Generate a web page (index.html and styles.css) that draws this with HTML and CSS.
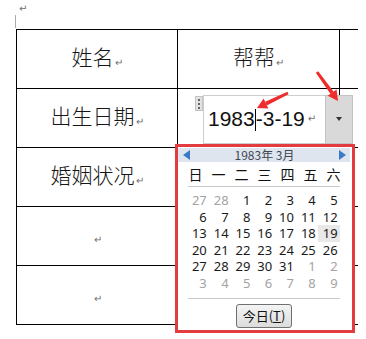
FILE: index.html
```html
<!DOCTYPE html>
<html>
<head>
<meta charset="utf-8">
<link rel="stylesheet" href="styles.css">
</head>
<body>
<div class="page">
  <div class="top"><span class="pm pm-top">↵</span></div>
  <table class="doc">
    <tr>
      <td class="c1"><span class="cell-text">姓名</span><span class="pm">↵</span></td>
      <td class="c2"><span class="cell-text">帮帮</span><span class="pm">↵</span></td>
      <td class="c3"></td>
    </tr>
    <tr>
      <td class="c1"><span class="cell-text">出生日期</span><span class="pm">↵</span></td>
      <td class="c2"></td>
      <td class="c3"></td>
    </tr>
    <tr>
      <td class="c1"><span class="cell-text">婚姻状况</span><span class="pm">↵</span></td>
      <td class="c2"></td>
      <td class="c3"></td>
    </tr>
    <tr>
      <td class="c1"><span class="pm">↵</span></td>
      <td class="c2"></td>
      <td class="c3"></td>
    </tr>
    <tr>
      <td class="c1"><span class="pm">↵</span></td>
      <td class="c2"></td>
      <td class="c3"></td>
    </tr>
  </table>

  <div class="datectl">
    <div class="handle"><i></i><i></i><i></i></div>
    <div class="datebox"><span>1983</span><span class="caret"></span><span>-3-19</span><span class="pm pm-date">↵</span></div>
    <div class="dropbtn"><span class="tri-down"></span></div>
  </div>

  <div class="popup">
    <div class="cal-head">
      <span class="tri-left"></span>
      <span class="cal-title">1983年 3月</span>
      <span class="tri-right"></span>
    </div>
    <div class="weekdays">
      <span>日</span><span>一</span><span>二</span><span>三</span><span>四</span><span>五</span><span>六</span>
    </div>
    <div class="sep"></div>
    <div class="days">
      <span class="dim">27</span><span class="dim">28</span><span>1</span><span>2</span><span>3</span><span>4</span><span>5</span>
      <span>6</span><span>7</span><span>8</span><span>9</span><span>10</span><span>11</span><span>12</span>
      <span>13</span><span>14</span><span>15</span><span>16</span><span>17</span><span>18</span><span class="sel">19</span>
      <span>20</span><span>21</span><span>22</span><span>23</span><span>24</span><span>25</span><span>26</span>
      <span>27</span><span>28</span><span>29</span><span>30</span><span>31</span><span class="dim">1</span><span class="dim">2</span>
      <span class="dim">3</span><span class="dim">4</span><span class="dim">5</span><span class="dim">6</span><span class="dim">7</span><span class="dim">8</span><span class="dim">9</span>
    </div>
    <div class="sep sep2"></div>
    <div class="btn-row"><button class="today">今日(<u>T</u>)</button></div>
  </div>

  <svg class="arrows" width="366" height="339" viewBox="0 0 366 339">
    <g fill="#ee2c2c" stroke="none">
      <polygon points="288.5,94.2 287.5,91.8 265.2,101.8 266.8,105.4"/>
      <polygon points="257,108 268.4,108.6 263.6,98.6"/>
      <polygon points="315.8,72.8 318.2,71.2 333.7,91.7 330.5,94.1"/>
      <polygon points="338,101 336.6,89.4 327.7,95.8"/>
    </g>
  </svg>
</div>
</body>
</html>
```

FILE: styles.css
```css
html, body {
  margin: 0;
  padding: 0;
  background: #fff;
}
.page {
  position: relative;
  width: 366px;
  height: 339px;
  overflow: hidden;
  font-family: "Noto Sans CJK SC", "Noto Sans", sans-serif;
  color: #111;
}
.top {
  position: relative;
  height: 29px;
}
.top::before {
  content: "";
  position: absolute;
  left: 15px;
  top: 15px;
  width: 1px;
  height: 13px;
  background: #aaa;
}
.pm {
  font-family: "DejaVu Sans", sans-serif;
  font-size: 10px;
  color: #6e6e6e;
  vertical-align: -1px;
  margin-left: 1px;
}
.pm-top {
  position: absolute;
  left: 18px;
  top: 3px;
}
.doc {
  border-collapse: collapse;
  margin-left: 16px;
  table-layout: fixed;
  width: 341px;
}
.doc td {
  height: 58px;
  padding: 0;
  border-top: 1px solid #000;
  border-bottom: 1px solid #000;
  text-align: center;
  vertical-align: middle;
  font-size: 21px;
  line-height: 24px;
  font-weight: 300;
}
.doc td.c1 {
  width: 160px;
  border-left: 1px solid #000;
  border-right: 1px solid #000;
}
.doc td.c2 {
  width: 161px;
  border-right: 1px solid #000;
}
.doc td.c3 {
  width: 18px;
}
.cell-text {
  color: #161616;
}

/* date content control */
.datectl {
  position: absolute;
  left: 195px;
  top: 95px;
  display: flex;
  align-items: flex-start;
}
.handle {
  width: 8px;
  height: 15px;
  margin-top: 1px;
  background: #e2e2e2;
  border: 1px solid #c4c4c4;
  box-sizing: border-box;
  display: flex;
  flex-direction: column;
  align-items: center;
  justify-content: center;
  gap: 2px;
}
.handle i {
  display: block;
  width: 2px;
  height: 2px;
  background: #666;
}
.datebox {
  width: 122px;
  height: 49px;
  box-sizing: border-box;
  border: 1px solid #cdcdcd;
  border-right: none;
  padding-left: 4px;
  padding-top: 10px;
  font-family: "Liberation Sans", sans-serif;
  font-size: 21px;
  line-height: 26px;
  color: #111;
  background: #fff;
  display: flex;
  align-items: flex-start;
}
.caret {
  display: inline-block;
  width: 1px;
  height: 22px;
  margin-top: 3px;
  background: #000;
}
.pm-date {
  margin-left: 3px;
  margin-top: 6px;
  line-height: 14px;
}
.dropbtn {
  width: 28px;
  height: 49px;
  box-sizing: border-box;
  background: #d9d9d9;
  border: 1px solid #c2c2c2;
  display: flex;
  justify-content: center;
  padding-top: 21px;
}
.tri-down {
  width: 0;
  height: 0;
  border-left: 3px solid transparent;
  border-right: 3px solid transparent;
  border-top: 4px solid #333;
}

/* popup calendar */
.popup {
  position: absolute;
  left: 175px;
  top: 144px;
  width: 180px;
  height: 189px;
  box-sizing: border-box;
  border: 3px solid #e23c40;
  background: #fff;
  display: flex;
  flex-direction: column;
}
.cal-head {
  margin: 1px 2px 0 0;
  height: 14px;
  background: #dfe5ee;
  display: flex;
  align-items: center;
  justify-content: space-between;
  padding: 0 4px 0 5px;
}
.tri-left {
  width: 0;
  height: 0;
  border-top: 5px solid transparent;
  border-bottom: 5px solid transparent;
  border-right: 7px solid #3b7bc6;
}
.tri-right {
  width: 0;
  height: 0;
  border-top: 5px solid transparent;
  border-bottom: 5px solid transparent;
  border-left: 7px solid #3b7bc6;
}
.cal-title {
  font-family: "Noto Sans CJK SC", sans-serif;
  font-size: 12px;
  line-height: 14px;
  color: #3e4652;
}
.weekdays {
  display: grid;
  grid-template-columns: repeat(7, 23px);
  margin-left: 6px;
  height: 24px;
  align-items: center;
  font-size: 14px;
  line-height: 16px;
  color: #111;
}
.weekdays span {
  text-align: center;
}
.sep {
  height: 1px;
  margin: 0 12px 0 10px;
  background: #c8c8c8;
}
.days {
  margin-top: 5px;
  margin-left: 9px;
  display: grid;
  grid-template-columns: repeat(7, 21.8px);
  grid-auto-rows: 16.6px;
  font-family: "Noto Sans", sans-serif;
  font-size: 13px;
  line-height: 16.6px;
  color: #1a1a1a;
}
.days span {
  text-align: right;
  padding-right: 2px;
}
.days .dim {
  color: #a3a3a3;
}
.days .sel {
  background: #e8e8e8;
}
.sep2 {
  margin-top: 6px;
}
.btn-row {
  display: flex;
  justify-content: center;
  margin-top: 5px;
  padding-right: 2px;
}
.today {
  width: 56px;
  height: 24px;
  padding: 0;
  border: 1px solid #707070;
  border-radius: 3px;
  background: linear-gradient(#f4f4f4, #dcdcdc);
  font-family: "Noto Sans CJK SC", sans-serif;
  font-size: 13px;
  line-height: 20px;
  color: #111;
}
.today u {
  text-decoration: underline;
}

.arrows {
  position: absolute;
  left: 0;
  top: 0;
  pointer-events: none;
}
```
